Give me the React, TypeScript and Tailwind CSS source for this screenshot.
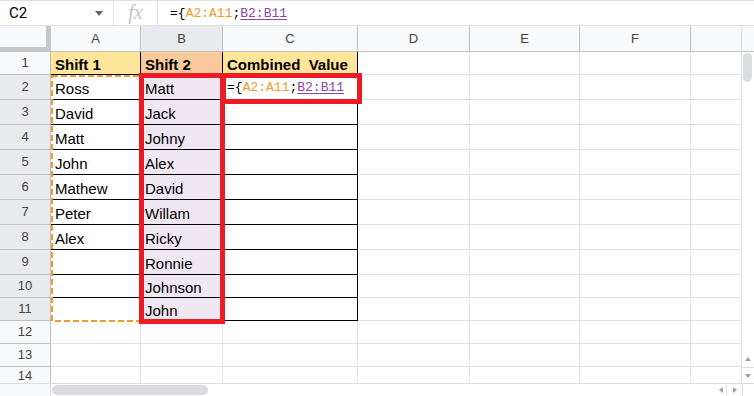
import React from "react";

type Row = {
  n: number;
  h: string;
  tall: boolean;
  a?: string;
  b?: string;
};

const rows: Row[] = [
  { n: 1, h: "h-[23px]", tall: false, a: "Shift 1", b: "Shift 2" },
  { n: 2, h: "h-[25px]", tall: true, a: "Ross", b: "Matt" },
  { n: 3, h: "h-[25px]", tall: true, a: "David", b: "Jack" },
  { n: 4, h: "h-[25px]", tall: true, a: "Matt", b: "Johny" },
  { n: 5, h: "h-[25px]", tall: true, a: "John", b: "Alex" },
  { n: 6, h: "h-[25px]", tall: true, a: "Mathew", b: "David" },
  { n: 7, h: "h-[25px]", tall: true, a: "Peter", b: "Willam" },
  { n: 8, h: "h-[25px]", tall: true, a: "Alex", b: "Ricky" },
  { n: 9, h: "h-[25px]", tall: true, b: "Ronnie" },
  { n: 10, h: "h-[23px]", tall: false, b: "Johnson" },
  { n: 11, h: "h-[23px]", tall: false, b: "John" },
  { n: 12, h: "h-[23px]", tall: false },
  { n: 13, h: "h-[23px]", tall: false },
  { n: 14, h: "h-[19px]", tall: false },
];

function Formula() {
  return (
    <span className="font-['Liberation_Mono',monospace] text-[13px] leading-[17px] text-black whitespace-pre">
      ={"{"}
      <span className="text-[#f29b2a]">A2:A11</span>;
      <span className="text-[#8e44a8] underline underline-offset-2">B2:B11</span>
    </span>
  );
}

export default function App() {
  return (
    <div className="relative w-[754px] h-[396px] overflow-hidden bg-white font-['Liberation_Sans',Arial,sans-serif] text-black select-none">
      {/* Formula bar */}
      <div className="flex h-[26px] border-t border-b border-[#e1e1e1]">
        <div className="flex items-center justify-between w-[114px] pl-[9px] pr-[10px] border-r border-[#e1e1e1]">
          <span className="text-[15px] font-['Roboto',sans-serif]">C2</span>
          <span className="w-0 h-0 border-l-[4px] border-r-[4px] border-t-[5px] border-l-transparent border-r-transparent border-t-[#666]" />
        </div>
        <div className="flex items-center justify-center w-[44px] border-r border-[#e1e1e1]">
          <span className="font-['Liberation_Serif',serif] italic text-[20px] leading-none text-[#c4c4c4] -mt-[3px]">fx</span>
        </div>
        <div className="flex items-center pl-[12px]">
          <Formula />
        </div>
      </div>

      <div className="flex h-[357px]">
        {/* Grid */}
        <div className="w-[741px] overflow-hidden">
          {/* Column header */}
          <div className="flex h-[26px] text-[13px] text-[#444]">
            <div className="w-[51px] bg-[#f8f9fa] border-r-[5px] border-b-[5px] border-[#c7c7c7]" />
            <div className="w-[90px] flex items-center justify-center bg-[#f8f9fa] border-r border-b border-[#c0c0c0]">A</div>
            <div className="w-[82px] flex items-center justify-center bg-[#e8eaed] border-r border-b border-[#c0c0c0]">B</div>
            <div className="w-[135px] flex items-center justify-center bg-[#f8f9fa] border-r border-b border-[#c0c0c0]">C</div>
            <div className="w-[112px] flex items-center justify-center bg-[#f8f9fa] border-r border-b border-[#c0c0c0]">D</div>
            <div className="w-[110px] flex items-center justify-center bg-[#f8f9fa] border-r border-b border-[#c0c0c0]">E</div>
            <div className="w-[111px] flex items-center justify-center bg-[#f8f9fa] border-r border-b border-[#c0c0c0]">F</div>
            <div className="w-[50px] bg-[#f8f9fa] border-b border-[#c0c0c0]" />
          </div>

          {rows.map((r) => {
            const inTable = r.n <= 11;
            const head = r.n === 1;
            const pad = r.tall ? "pb-[2px]" : "pb-[1px]";
            return (
              <div key={r.n} className={"flex " + r.h}>
                <div
                  className={
                    r.n >= 2 && r.n <= 11
                      ? "w-[51px] flex items-center justify-center text-[13px] text-[#444] bg-[#e8eaed] border-r border-b border-[#c0c0c0]"
                      : "w-[51px] flex items-center justify-center text-[13px] text-[#444] bg-[#f8f9fa] border-r border-b border-[#c0c0c0]"
                  }
                >
                  {r.n}
                </div>
                {/* A */}
                <div
                  className={[
                    "w-[90px] flex items-end pl-[4px] text-[15px] leading-[17px] border-r border-b",
                    pad,
                    head ? "bg-[#ffe599] font-bold text-[14.5px]" : "",
                    inTable && r.n < 11 ? "border-[#000]" : "border-[#e2e2e2]",
                    r.n === 11 ? "border-b-white" : "",
                  ].join(" ")}
                >
                  {r.a}
                </div>
                {/* B */}
                <div
                  className={[
                    "w-[82px] flex items-end pl-[4px] text-[15px] leading-[17px] border-r border-b",
                    pad,
                    head ? "bg-[#f9cb9c] font-bold text-[14.5px]" : "",
                    !head && inTable ? "bg-[#efe8f3]" : "",
                    inTable ? "border-[#000]" : "border-[#e2e2e2]",
                  ].join(" ")}
                >
                  {r.b}
                </div>
                {/* C */}
                <div
                  className={[
                    "w-[135px] flex items-end pl-[4px] text-[15px] leading-[17px] border-r border-b whitespace-pre",
                    pad,
                    head ? "bg-[#ffe599] font-bold text-[14.5px]" : "",
                    inTable ? "border-[#000]" : "border-[#e2e2e2]",
                  ].join(" ")}
                >
                  {head ? "Combined  Value" : r.n === 2 ? <span className="pb-[1px]"><Formula /></span> : null}
                </div>
                <div className="w-[112px] border-r border-b border-[#e2e2e2]" />
                <div className="w-[110px] border-r border-b border-[#e2e2e2]" />
                <div className="w-[111px] border-r border-b border-[#e2e2e2]" />
                <div className="w-[50px] border-b border-[#e2e2e2]" />
              </div>
            );
          })}
        </div>

        {/* Vertical scrollbar */}
        <div className="w-[13px] flex flex-col border-l border-[#dadce0]">
          <div className="h-[26px] bg-[#f8f9fa] border-b border-[#c0c0c0]" />
          <div className="flex-1 pt-[1px] px-[1px]">
            <div className="h-[29px] w-[9px] rounded-full bg-[#dadce0]" />
          </div>
          <div className="h-[17px] flex items-center justify-center">
            <span className="w-0 h-0 border-l-[3px] border-r-[3px] border-b-[4px] border-l-transparent border-r-transparent border-b-[#9aa0a6]" />
          </div>
          <div className="h-[16px] flex items-center justify-center border-t border-[#e2e2e2]">
            <span className="w-0 h-0 border-l-[3px] border-r-[3px] border-t-[4px] border-l-transparent border-r-transparent border-t-[#9aa0a6]" />
          </div>
        </div>
      </div>

      {/* Horizontal scrollbar */}
      <div className="flex h-[13px] border-t border-[#dadce0]">
        <div className="w-[51px] bg-[#f8f9fa] border-r border-[#dadce0]" />
        <div className="w-[665px] flex items-center pl-[1px]">
          <div className="h-[10px] w-[156px] rounded-full bg-[#dadce0]" />
        </div>
        <div className="w-[10px] flex items-center justify-center">
          <span className="w-0 h-0 border-t-[3px] border-b-[3px] border-r-[4px] border-t-transparent border-b-transparent border-r-[#9aa0a6]" />
        </div>
        <div className="w-[16px] flex items-center justify-center border-l border-[#e2e2e2]">
          <span className="w-0 h-0 border-t-[3px] border-b-[3px] border-l-[4px] border-t-transparent border-b-transparent border-l-[#9aa0a6]" />
        </div>
        <div className="flex-1 border-l border-[#dadce0]" />
      </div>

      {/* Reference highlight for A2:A11 */}
      <svg className="absolute left-[50px] top-[74px]" width="93" height="249" viewBox="0 0 93 249">
        <rect x="2" y="2" width="89" height="245" fill="none" stroke="#f29b2a" strokeWidth="2" strokeDasharray="6 3" />
      </svg>

      {/* Annotation boxes */}
      <div className="absolute left-[139px] top-[73px] w-[86px] h-[251px] border-[5px] border-[#ed1c24]" />
      <div className="absolute left-[221px] top-[73px] w-[141px] h-[31px] border-[5px] border-[#ed1c24]" />
    </div>
  );
}
